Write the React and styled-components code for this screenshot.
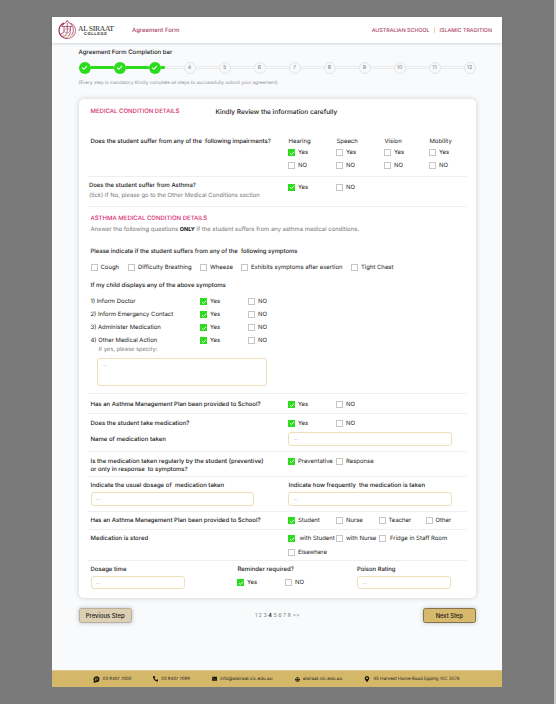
import React from "react";
import styled, { createGlobalStyle } from "styled-components";
import { FaPhoneAlt, FaEnvelope, FaGlobe, FaMapMarkerAlt } from "react-icons/fa";

const Global = createGlobalStyle`
  * { box-sizing: border-box; }
  body {
    margin: 0;
    background: #7a7a7a;
    font-family: Inter, "Liberation Sans", sans-serif;
    text-rendering: geometricPrecision;
    -webkit-font-smoothing: antialiased;
  }
`;

const Desk = styled.div`
  height: 704px;
  padding: 17px 0 0 52px;
  border-right: 2px solid #cbcbcb;
  overflow: hidden;
`;
const Page = styled.div`
  width: 450px;
  height: 670px;
  background: #f9fafb;
  display: flex;
  flex-direction: column;
`;
const Text = styled.span`
  font-size: ${(p) => p.$size || 5.95}px;
  font-weight: ${(p) => p.$weight || 400};
  color: ${(p) => p.$color || "#222"};
  letter-spacing: ${(p) => p.$track || 0}px;
  line-height: 6px;
  margin-top: 1.6px;
  white-space: pre;
`;

/* Header */
const Header = styled.header`
  height: 26px;
  flex: none;
  display: flex;
  align-items: center;
  padding: 0 10px 0 6px;
  background: #fff;
  box-shadow: 0 1px 3px rgba(70, 90, 100, 0.22);
`;
const Brand = styled.div`
  display: flex;
  align-items: center;
  gap: 1.5px;
  width: 74px;
`;
const BrandName = styled.div`
  display: flex;
  flex-direction: column;
  align-items: center;
  font-family: "Liberation Serif", serif;
  color: #222;
  white-space: nowrap;
`;
const BrandTop = styled.span`
  font-size: 7.6px;
  line-height: 6.6px;
  letter-spacing: -0.3px;
  margin-top: 2px;
`;
const BrandSub = styled.span`
  font-family: "Liberation Sans", sans-serif;
  font-weight: 700;
  font-size: 4px;
  line-height: 4.4px;
  letter-spacing: 0.6px;
`;
const Tagline = styled.div`
  margin-left: auto;
  display: flex;
  align-items: center;
`;
const Bar = styled.i`
  width: 1px;
  height: 6px;
  margin: 0 5px 0 4px;
  background: #ead9a4;
`;

/* Progress */
const Progress = styled.section`
  padding: 4px 0 0 26.5px;
  height: 55.5px;
  flex: none;
`;
const Steps = styled.div`
  display: flex;
  align-items: center;
  height: 14px;
  margin: 3.5px 0 3.5px;
`;
const Dot = styled.span`
  width: 12px;
  height: 12px;
  flex: none;
  border-radius: 50%;
  display: flex;
  align-items: center;
  justify-content: center;
  background: ${(p) => (p.$done ? "#2bdc1d" : "#f8f9fa")};
  border: ${(p) => (p.$done ? "0" : "1px solid #e2e4e6")};
`;
const Link = styled.span`
  width: 23px;
  height: 3px;
  display: flex;
  border: solid #e9ebec;
  border-width: 1px 0;
`;
const LinkFill = styled.span`
  width: ${(p) => p.$width}px;
  height: 3px;
  flex: none;
  margin-top: -1px;
  border-radius: 0 1px 1px 0;
  background: #2bdc1d;
`;

/* Card */
const Card = styled.main`
  width: 397.5px;
  height: 499.5px;
  flex: none;
  margin-left: 26.5px;
  padding: 0 9px;
  border-radius: 5px;
  background: #fff;
  box-shadow: 0 0 5px rgba(70, 85, 105, 0.25);
`;
const Section = styled.section`
  display: flow-root;
  height: ${(p) => p.$height}px;
  padding-left: 3px;
  border-bottom: ${(p) => (p.$last ? "0" : "1px solid #eeeff0")};
`;
const Row = styled.div`
  display: flex;
  align-items: center;
  height: ${(p) => p.$height || 10}px;
  margin-top: ${(p) => p.$top || 0}px;
  margin-left: ${(p) => p.$indent || 0}px;
`;
const Split = styled.div`
  display: grid;
  grid-template-columns: 199px 1fr;
  margin-left: -1.5px;
`;
const Cell = styled.div`
  width: ${(p) => p.$width}px;
  flex: none;
  display: flex;
  align-items: center;
`;
const Option = styled.label`
  width: ${(p) => p.$width || 48}px;
  flex: none;
  display: flex;
  align-items: center;
  gap: ${(p) => p.$gap || 3}px;
`;
const Box = styled.span`
  width: 7px;
  height: 7px;
  flex: none;
  display: grid;
  place-items: center;
  background: ${(p) => (p.$checked ? "#2bdc1d" : "#fff")};
  border: ${(p) => (p.$checked ? "0" : "1px solid #c6c6c6")};
`;
const Field = styled.div`
  width: ${(p) => p.$width}px;
  height: ${(p) => p.$height || 13.5}px;
  padding: 3px 4.5px;
  border: 1px solid #ecdfb9;
  border-radius: 3px;
  background: #fff;
  color: #8a8a8a;
  font-size: 5px;
  line-height: 6px;
`;

/* Navigation and footer */
const Nav = styled.nav`
  display: flex;
  justify-content: space-between;
  align-items: center;
  width: 397.5px;
  margin: 9.5px 0 0 26.5px;
`;
const Button = styled.button`
  width: 53.5px;
  height: 15.5px;
  padding: 0;
  border-radius: 2.5px;
  border: 1px solid ${(p) => (p.$primary ? "#85744a" : "#b9af9a")};
  background: ${(p) => (p.$primary ? "#d6b96c" : "#dccfb3")};
  box-shadow: 0 0 4px rgba(80, 100, 130, 0.4);
  display: grid;
  place-items: center;
  font-family: inherit;
`;
const Footer = styled.footer`
  height: 17px;
  margin-top: auto;
  padding-left: 41px;
  display: grid;
  grid-template-columns: 59.5px 59px 83px 69.5px 1fr;
  align-items: center;
  background: #d5b76a;
  border-top: 1px solid #dfc98f;
`;
const Contact = styled.div`
  display: flex;
  align-items: center;
  gap: 3.2px;
  color: #16130a;
`;

const PINK = "#d82a70";
const MAROON = "#a94164";
const GREY = "#777";

const Tick = ({ size }) => (
  <svg width={size} height={size} viewBox="0 0 10 10" fill="none" stroke="#fff" strokeWidth="1.5">
    <path d="M1.5 5.3 4 7.6 8.6 2.8" />
  </svg>
);

const Logo = () => (
  <svg width="18.5" height="20" viewBox="0 0 37 40" fill="none">
    <path d="M12 6C5 9 2 15 2 21c0 9 7 16 16 16" stroke="#a02c52" strokeWidth="2.4" />
    <path d="M25 6c7 3 10 9 10 15 0 9-7 16-17 16" stroke="#b9688a" strokeWidth="2" />
    <path d="M18.5 1c-1 5-9 6-11 12M18.5 1c1 5 9 6 11 12" stroke="#a02c52" strokeWidth="1.8" />
    <path d="M8 13h21M18.5 6v17c0 6-4 9-9 9M12 14v8c0 4-3 5-6 5M25 14v8c0 5-2 8-5 10M30 14c1 6 1 12-3 16" stroke="#a8436a" strokeWidth="1.7" />
    <path d="M14 19c4-4 9-3 10 1s-5 7-9 5-4-4-1-6z" stroke="#b9688a" strokeWidth="1.4" />
    <path d="M6 29c6 4 18 5 26-2M11 34c6 2 13 1 18-3M21 18l5 7" stroke="#dcbf98" strokeWidth="1.6" />
  </svg>
);

const CallBadge = () => (
  <svg width="6.5" height="7" viewBox="0 0 13 14">
    <path d="M6.8.5a6 6 0 1 1 0 12.2L1 13.5l.8-4A6.2 6.2 0 0 1 6.8.5z" fill="#16130a" />
    <path d="M5 10V4.3h2.5a1.7 1.7 0 0 1 0 3.5H5.5" fill="none" stroke="#d5b76a" strokeWidth="1.2" />
  </svg>
);

const Check = ({ label, checked, width, gap }) => (
  <Option $width={width} $gap={gap}>
    <Box $checked={checked}>{checked && <Tick size={6} />}</Box>
    <Text>{label}</Text>
  </Option>
);
const Question = ({ children, size }) => (
  <Text $weight={500} $size={size} $color="#181818">{children}</Text>
);
const YesNo = () => (
  <>
    <Check label="Yes" checked />
    <Check label="NO" />
  </>
);

const STEPS = [1, 2, 3, 4, 5, 6, 7, 8, 9, 10, 11, 12];
const linkFill = (n) => (n < 3 ? 23 : n === 3 ? 4 : 0);
const IMPAIRMENTS = [["Hearing", 48], ["Speech", 48], ["Vision", 45], ["Mobility", 30]];
const ACTIONS = ["1) Inform Doctor", "2) Inform Emergency Contact", "3) Administer Medication", "4) Other Medical Action"];
const SYMPTOMS = [["Cough", 37.5], ["Difficulty Breathing", 72], ["Wheeze", 41], ["Exhibits symptoms after exertion", 110], ["Tight Chest", 45]];

export default function App() {
  return (
    <Desk>
      <Global />
      <Page>
        <Header>
          <Brand>
            <Logo />
            <BrandName>
              <BrandTop>AL SIRAAT</BrandTop>
              <BrandSub>COLLEGE</BrandSub>
            </BrandName>
          </Brand>
          <Text $weight={500} $color={MAROON}>Agreement Form</Text>
          <Tagline>
            <Text $weight={500} $color={MAROON} $size={5.33}>AUSTRALIAN SCHOOL</Text>
            <Bar />
            <Text $weight={500} $color={MAROON} $size={5.33}>ISLAMIC TRADITION</Text>
          </Tagline>
        </Header>

        <Progress>
          <Row><Question size={6.03}>Agreement Form Completion bar</Question></Row>
          <Steps>
            {STEPS.map((n) => (
              <React.Fragment key={n}>
                <Dot $done={n <= 3}>
                  {n <= 3 ? <Tick size={7} /> : <Text $size={5.3} $color={GREY}>{n}</Text>}
                </Dot>
                {n < 12 && <Link><LinkFill $width={linkFill(n)} /></Link>}
              </React.Fragment>
            ))}
          </Steps>
          <Row $height={9}>
            <Text $size={4.67} $color="#8f9397">
              (Every step is mandatory Kindly complete all steps to successfully submit your agreement)
            </Text>
          </Row>
        </Progress>

        <Card>
          <Section $height={78.5}>
            <Row $top={8}>
              <Cell $width={125}><Text $weight={500} $color={PINK} $size={6}>MEDICAL CONDITION DETAILS</Text></Cell>
              <Question size={6.53}>Kindly Review the information carefully</Question>
            </Row>
            <Row $top={20}>
              <Cell $width={198}><Question>Does the student suffer from any of the  following impairments?</Question></Cell>
              {IMPAIRMENTS.map(([name, width]) => (
                <Cell key={name} $width={width}><Text>{name}</Text></Cell>
              ))}
            </Row>
            <Row $top={1} $indent={197.5}>
              {IMPAIRMENTS.map(([name, width], i) => (
                <Check key={name} label="Yes" width={width} checked={i === 0} />
              ))}
            </Row>
            <Row $top={3} $indent={197.5}>
              {IMPAIRMENTS.map(([name, width]) => (
                <Check key={name} label="NO" width={width} />
              ))}
            </Row>
          </Section>

          <Section $height={30}>
            <Split>
              <div>
                <Row $top={3.5}><Question size={5.9}>Does the student suffer from Asthma?</Question></Row>
                <Row><Text $size={5.87} $color={GREY}>(tick) If No, please go to the Other Medical Conditions section</Text></Row>
              </div>
              <Row $top={5}><YesNo /></Row>
            </Split>
          </Section>

          <Section $height={187}>
            <Row $top={6.5}><Text $weight={500} $color={PINK} $size={6}>ASTHMA MEDICAL CONDITION DETAILS</Text></Row>
            <Row $top={0.5}>
              <Text $color={GREY} $size={5.93}>
                Answer the following questions <Text $weight={700} $color="#111" $size={5.5}>ONLY</Text> if the student suffers from any asthma medical conditions.
              </Text>
            </Row>
            <Row $top={12.5}><Question size={5.9}>Please indicate if the student suffers from any of the  following symptoms</Question></Row>
            <Row $top={6}>
              {SYMPTOMS.map(([name, width]) => <Check key={name} label={name} width={width} />)}
            </Row>
            <Row $top={8}><Question size={5.99}>If my child displays any of the above symptoms</Question></Row>
            {ACTIONS.map((name, i) => (
              <Row key={name} $top={i ? 3 : 6}>
                <Cell $width={109.5}><Text>{name}</Text></Cell>
                <YesNo />
              </Row>
            ))}
            <Row $height={7} $indent={8}><Text $color={GREY} $size={5.73}>If yes, please specify:</Text></Row>
            <Row $top={5.5} $height={28} $indent={6.5}>
              <Field $width={170} $height={28}>...</Field>
            </Row>
          </Section>

          <Section $height={20}>
            <Row $top={5.5}>
              <Cell $width={197.5}><Question size={5.98}>Has an Asthma Management Plan been provided to School?</Question></Cell>
              <YesNo />
            </Row>
          </Section>

          <Section $height={38}>
            <Row $top={4}>
              <Cell $width={197.5}><Question size={5.99}>Does the student take medication?</Question></Cell>
              <YesNo />
            </Row>
            <Row $top={4} $height={14}>
              <Cell $width={197.5}><Question size={6.03}>Name of medication taken</Question></Cell>
              <Field $width={163.5}>...</Field>
            </Row>
          </Section>

          <Section $height={25}>
            <Row $top={4}>
              <Cell $width={197.5}><Question size={6.02}>Is the medication taken regularly by the student (preventive)</Question></Cell>
              <Check label="Preventative" checked />
              <Check label="Response" />
            </Row>
            <Row $height={7}><Question>or only in response  to symptoms?</Question></Row>
          </Section>

          <Section $height={35}>
            <Row $top={3}>
              <Cell $width={198}><Question size={6.03}>Indicate the usual dosage of  medication taken</Question></Cell>
              <Question size={5.97}>Indicate how frequently  the medication is taken</Question>
            </Row>
            <Row $top={2} $height={14}>
              <Cell $width={197.5}><Field $width={163.5}>...</Field></Cell>
              <Field $width={163.5}>...</Field>
            </Row>
          </Section>

          <Section $height={18}>
            <Row $top={3.5}>
              <Cell $width={197.5}><Question size={5.98}>Has an Asthma Management Plan been provided to School?</Question></Cell>
              <Check label="Student" checked />
              <Check label="Nurse" width={42.5} />
              <Check label="Teacher" width={47} />
              <Check label="Other" width={30} />
            </Row>
          </Section>

          <Section $height={31}>
            <Row $top={3.5}>
              <Cell $width={197.5}><Question>Medication is stored</Question></Cell>
              <Check label="with Student" checked gap={4.5} />
              <Check label="with Nurse" width={42.5} />
              <Check label="Fridge in Staff Room" width={75} gap={4.5} />
            </Row>
            <Row $top={4} $indent={197.5}><Check label="Elsewhere" /></Row>
          </Section>

          <Section $height={36} $last>
            <Row $top={3}>
              <Cell $width={147}><Question size={6.03}>Dosage time</Question></Cell>
              <Cell $width={119.5}><Question size={6.04}>Reminder required?</Question></Cell>
              <Question size={5.9}>Poison Rating</Question>
            </Row>
            <Row $top={1.5} $height={14}>
              <Cell $width={146.5}><Field $width={94.5}>...</Field></Cell>
              <Cell $width={120}><YesNo /></Cell>
              <Field $width={94}>...</Field>
            </Row>
          </Section>
        </Card>

        <Nav>
          <Button><Question size={5.9}>Previous Step</Question></Button>
          <Text $color="#85898d" $size={5.4}>1 2 3 <Text $size={5.4} $weight={600}>4</Text> 5 6 7 8 &gt;&gt;</Text>
          <Button $primary><Question size={5.8}>Next Step</Question></Button>
        </Nav>

        <Footer>
          <Contact><CallBadge /><Text $size={4.3}>03 9407 7000</Text></Contact>
          <Contact><FaPhoneAlt size={5.5} /><Text $size={4.3}>03 9407 7099</Text></Contact>
          <Contact><FaEnvelope size={5.5} /><Text $size={4.62}>info@alsiraat.vic.edu.au</Text></Contact>
          <Contact><FaGlobe size={5} /><Text $size={4.6}>alsiraat.vic.edu.au</Text></Contact>
          <Contact><FaMapMarkerAlt size={6} /><Text $size={4.5}>45 Harvest Home Road Epping VIC 3076</Text></Contact>
        </Footer>
      </Page>
    </Desk>
  );
}
